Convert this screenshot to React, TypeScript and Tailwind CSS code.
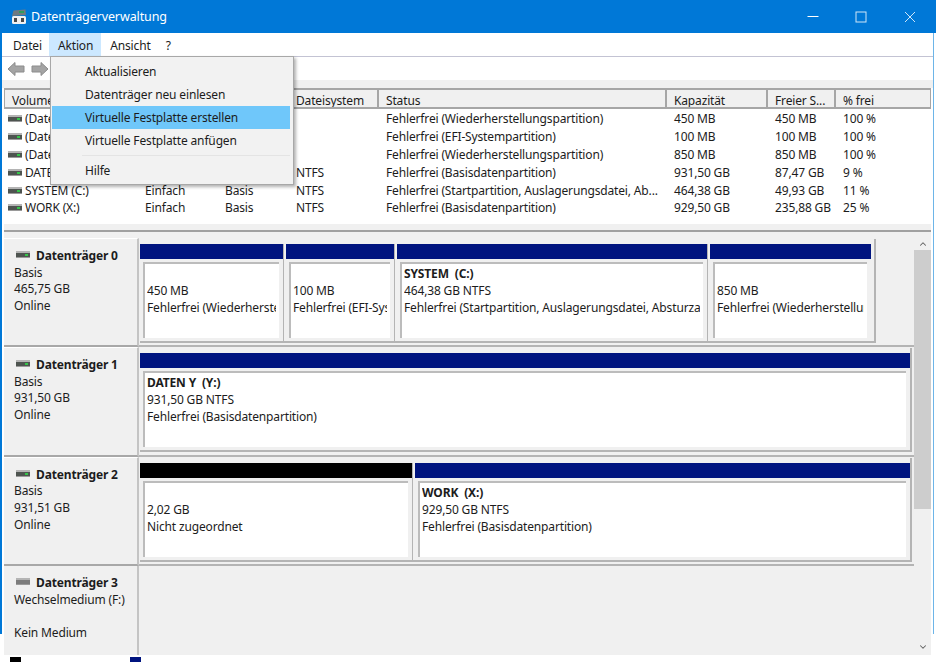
import { ChevronDown, ChevronUp } from "lucide-react";

type Part = { w: string; color?: string; lines: string[]; bold?: boolean; last?: boolean };

const COLS = "grid grid-cols-[133px_80px_71px_90px_288px_101px_68px_96px]";

const HEADERS = ["Volume", "Layout", "Typ", "Dateisystem", "Status", "Kapazität", "Freier S...", "% frei"];

const ROWS = [
	["(Datenträger 0 Partition 1)", "Einfach", "Basis", "", "Fehlerfrei (Wiederherstellungspartition)", "450 MB", "450 MB", "100 %"],
	["(Datenträger 0 Partition 2)", "Einfach", "Basis", "", "Fehlerfrei (EFI-Systempartition)", "100 MB", "100 MB", "100 %"],
	["(Datenträger 0 Partition 5)", "Einfach", "Basis", "", "Fehlerfrei (Wiederherstellungspartition)", "850 MB", "850 MB", "100 %"],
	["DATEN Y (Y:)", "Einfach", "Basis", "NTFS", "Fehlerfrei (Basisdatenpartition)", "931,50 GB", "87,47 GB", "9 %"],
	["SYSTEM (C:)", "Einfach", "Basis", "NTFS", "Fehlerfrei (Startpartition, Auslagerungsdatei, Ab...", "464,38 GB", "49,93 GB", "11 %"],
	["WORK (X:)", "Einfach", "Basis", "NTFS", "Fehlerfrei (Basisdatenpartition)", "929,50 GB", "235,88 GB", "25 %"],
];

function DiskIcon({ online = true }: { online?: boolean }) {
	return (
		<svg width="14" height="7" viewBox="0 0 14 7" className="shrink-0">
			<rect x="0" y="0" width="14" height="2" fill="#b4b4b4" />
			<rect x="0" y="2" width="14" height="4" fill={online ? "#4e5450" : "#7c7c7c"} />
			{online && <rect x="9" y="3" width="3" height="2" fill="#35c44a" />}
			<rect x="0" y="6" width="14" height="1" fill="#9a9a9a" />
		</svg>
	);
}

function ArrowIcon({ flip }: { flip?: boolean }) {
	return (
		<svg width="18" height="16" viewBox="0 0 18 16" className={flip ? "-scale-x-100" : ""}>
			<path d="M1 8 L8 1.5 V5 H17 V11 H8 V14.5 Z" fill="#a4a4a4" stroke="#8c8c8c" strokeWidth="1" />
		</svg>
	);
}

function AppIcon() {
	return (
		<svg width="16" height="16" viewBox="0 0 16 16" className="shrink-0">
			<path d="M2.5 1.5 L14.5 0.5 L15 6 L1 7 Z" fill="#6f7a80" />
			<rect x="8" y="2" width="5" height="2" fill="#2f9e5a" />
			<rect x="1" y="7" width="14" height="8" rx="1.5" fill="#f1f1f1" />
			<rect x="3" y="9" width="3" height="4" fill="#4a4a4a" />
			<rect x="10" y="9" width="3" height="4" fill="#4a4a4a" />
		</svg>
	);
}

function Partition({ w, color = "bg-[#00147f]", lines, bold, last }: Part) {
	return (
		<div className={`${w} shrink-0 flex flex-col ${last ? "" : "border-r border-[#b4b4b4]"}`}>
			<div className={`h-[15px] ${color}`} />
			<div className="mt-[3px] ml-[3px] mr-[2px] flex-1 min-h-0 bg-[#f0f0f0] pr-[2px] pb-[3px] flex flex-col">
				<div className="flex-1 bg-white border-t-2 border-l-2 border-[#bcbcbc] pl-[2px] pr-[3px] pt-[1px] leading-[17px]">
					<div className="overflow-hidden whitespace-pre">
						{lines.map((line, i) => (
							<div key={i} className={bold && i === 0 ? "font-bold" : ""}>
								{line || "\u00a0"}
							</div>
						))}
					</div>
				</div>
			</div>
		</div>
	);
}

function DiskLabel({ name, online }: { name: string; online?: boolean }) {
	return (
		<div className="flex items-center gap-[6px] font-bold pt-[1px]">
			<div className="pl-[2px] -mt-[3px]">
				<DiskIcon online={online} />
			</div>
			<span>{name}</span>
		</div>
	);
}

function DiskRow({
	name,
	info,
	rowH,
	frame,
	parts,
}: {
	name: string;
	info: string[];
	rowH: string;
	frame: string;
	parts: Part[];
}) {
	return (
		<div className={`flex ${rowH} shrink-0`}>
			<div className="w-[135px] shrink-0 border-t border-white border-b-2 border-b-[#a8a8a8] border-r-2 border-r-[#c4c4c4] pl-[10px] pt-[8px] leading-[16.7px]">
				<DiskLabel name={name} online />
				{info.map((line, i) => (
					<div key={i}>{line || "\u00a0"}</div>
				))}
			</div>
			<div className="flex-1 pt-[1px] pl-[1px] border-b-2 border-[#b4b4b4]">
				<div className={`${frame} h-[104px] pt-[5px] flex gap-[2px] border-r-2 border-b-2 border-[#b4b4b4]`}>
					{parts.map((p, i) => (
						<Partition key={i} {...p} last={i === parts.length - 1} />
					))}
				</div>
			</div>
		</div>
	);
}

export default function App() {
	return (
		<div className="relative h-[662px] w-[936px] overflow-hidden bg-white text-[#1c1c1c] text-[12px] tracking-[-0.15px] font-['Noto_Sans',sans-serif] flex flex-col">
			<div className="h-[33px] shrink-0 bg-[#0078d7] flex items-center text-white">
				<div className="ml-[11px] mr-[4px]">
					<AppIcon />
				</div>
				<span className="text-[12.5px] tracking-[-0.1px] pt-[1px]">Datenträgerverwaltung</span>
				<div className="ml-auto flex items-center mt-[1px]">
					<svg width="12" height="12" viewBox="0 0 12 12" className="mr-[36px]">
						<path d="M0.5 5.5 H11.5" stroke="#fff" />
					</svg>
					<svg width="12" height="12" viewBox="0 0 12 12" className="mr-[37px]">
						<rect x="1" y="1" width="10" height="10" fill="none" stroke="#cfe6f8" />
					</svg>
					<svg width="12" height="12" viewBox="0 0 12 12" className="mr-[20px]">
						<path d="M1 1 L11 11 M11 1 L1 11" stroke="#cfe6f8" />
					</svg>
				</div>
			</div>

			<div className="flex flex-1 min-h-0">
				<div className="w-[2px] h-[601px] shrink-0 bg-[#0078d7]" />
				<div className="flex-1 min-w-0 flex flex-col">
					<div className="h-[24px] shrink-0 flex items-stretch pl-[2px] border-b border-[#c3c3d3]">
						<div className="pl-[9px] pr-[7px] pt-[3px] flex items-center">Datei</div>
						<div className="pl-[9px] pr-[8px] pt-[3px] flex items-center bg-[#cce8ff]">Aktion</div>
						<div className="pl-[9px] pr-[7px] pt-[3px] flex items-center">Ansicht</div>
						<div className="px-[8px] pt-[3px] flex items-center">?</div>
					</div>
					<div className="h-[23px] shrink-0 flex items-center gap-[6px] pl-[5px] pt-[1px]">
						<ArrowIcon />
						<ArrowIcon flip />
					</div>
					<div className="h-[8px] shrink-0 bg-[#f0f0f0]" />

					<div className="h-[136px] shrink-0 ml-[2px] mr-[2px]">
						<div className={`${COLS} h-[21px] bg-[#f0f0f0]`}>
							{HEADERS.map((h) => (
								<div
									key={h}
									className="border-y-2 border-x border-[#a6a6a6] pl-[7px] pt-[4px] flex items-center whitespace-nowrap overflow-hidden"
								>
									{h}
								</div>
							))}
						</div>
						<div className="pt-[1px]">
							{ROWS.map((row, r) => (
								<div key={r} className={`${COLS} h-[17.8px] items-center leading-[17px]`}>
									{row.map((cell, c) => (
										<div key={c} className={`whitespace-nowrap overflow-hidden ${c === 0 ? "flex items-center gap-[3px] pl-[4px]" : "pl-[8px]"}`}>
											{c === 0 && <DiskIcon />}
											{cell}
										</div>
									))}
								</div>
							))}
						</div>
					</div>

					<div className="h-[6px] shrink-0 ml-[2px] mr-[2px] bg-[#f0f0f0]" />
					<div className="h-[2px] shrink-0 ml-[2px] mr-[2px] bg-[#a0a0a0]" />
					<div className="h-[6px] shrink-0 ml-[2px] mr-[2px] bg-[#f0f0f0]" />

					<div className="flex h-[417px] shrink-0 ml-[2px] mr-[2px] bg-[#f0f0f0]">
						<div className="flex-1 min-w-0 flex flex-col overflow-hidden">
							<DiskRow
								name="Datenträger 0"
								info={["Basis", "465,75 GB", "Online"]}
								rowH="h-[109px]"
								frame="w-[736px]"
								parts={[
									{ w: "w-[144px]", lines: ["", "450 MB", "Fehlerfrei (Wiederherstellungspartition)"] },
									{ w: "w-[109px]", lines: ["", "100 MB", "Fehlerfrei (EFI-Systempartition)"] },
									{ w: "w-[311px]", bold: true, lines: ["SYSTEM  (C:)", "464,38 GB NTFS", "Fehlerfrei (Startpartition, Auslagerungsdatei, Absturzabbild)"] },
									{ w: "w-[161px]", lines: ["", "850 MB", "Fehlerfrei (Wiederherstellungspartition)"] },
								]}
							/>
							<DiskRow
								name="Datenträger 1"
								info={["Basis", "931,50 GB", "Online"]}
								rowH="h-[109.5px]"
								frame="w-[772px]"
								parts={[{ w: "w-[770px]", bold: true, lines: ["DATEN Y  (Y:)", "931,50 GB NTFS", "Fehlerfrei (Basisdatenpartition)"] }]}
							/>
							<DiskRow
								name="Datenträger 2"
								info={["Basis", "931,51 GB", "Online"]}
								rowH="h-[109.5px]"
								frame="w-[772px]"
								parts={[
									{ w: "w-[273px]", color: "bg-black", lines: ["", "2,02 GB", "Nicht zugeordnet"] },
									{ w: "w-[495px]", bold: true, lines: ["WORK  (X:)", "929,50 GB NTFS", "Fehlerfrei (Basisdatenpartition)"] },
								]}
							/>
							<div className="flex flex-1">
								<div className="w-[135px] shrink-0 border-r-2 border-r-[#c4c4c4] pl-[10px] pt-[8px] leading-[16.7px]">
									<DiskLabel name="Datenträger 3" online={false} />
									<div>Wechselmedium (F:)</div>
									<div>&nbsp;</div>
									<div>Kein Medium</div>
								</div>
							</div>
						</div>
						<div className="w-[17px] shrink-0 flex flex-col items-center">
							<div className="h-[12px] flex items-center">
								<ChevronUp size={10} strokeWidth={2.5} className="text-[#606060]" />
							</div>
							<div className="w-full h-[259px] bg-[#cdcdcd]" />
							<div className="mt-auto h-[17px] flex items-center">
								<ChevronDown size={10} strokeWidth={2.5} className="text-[#606060]" />
							</div>
						</div>
					</div>

					<div className="flex-1 flex gap-[109px] pl-[8px] pt-[2px] overflow-hidden">
						<div className="w-[11px] h-[11px] shrink-0 bg-black" />
						<div className="w-[11px] h-[11px] shrink-0 bg-[#00147f]" />
					</div>
				</div>
				<div className="w-[1px] h-[601px] shrink-0 bg-[#6db5e8]" />
				<div className="w-[2px] shrink-0" />
			</div>

			<div className="absolute left-[50px] top-[56px] w-[244px] h-[129px] bg-[#f2f2f2] border border-[#a8a8a8] shadow-[2px_2px_3px_rgba(0,0,0,0.3)] pl-[1px] pr-[3px] pt-[3px]">
				<div className="h-[23px] pl-[33px] flex items-center">Aktualisieren</div>
				<div className="h-[23px] pl-[33px] flex items-center">Datenträger neu einlesen</div>
				<div className="h-[23px] pl-[33px] flex items-center bg-[#6fc7fa]">Virtuelle Festplatte erstellen</div>
				<div className="h-[23px] pl-[33px] flex items-center">Virtuelle Festplatte anfügen</div>
				<div className="h-[6px] flex items-center pl-[30px]">
					<div className="h-px w-full bg-[#e4e4e4]" />
				</div>
				<div className="h-[23px] pl-[33px] pt-[3px] flex items-center">Hilfe</div>
			</div>
		</div>
	);
}
